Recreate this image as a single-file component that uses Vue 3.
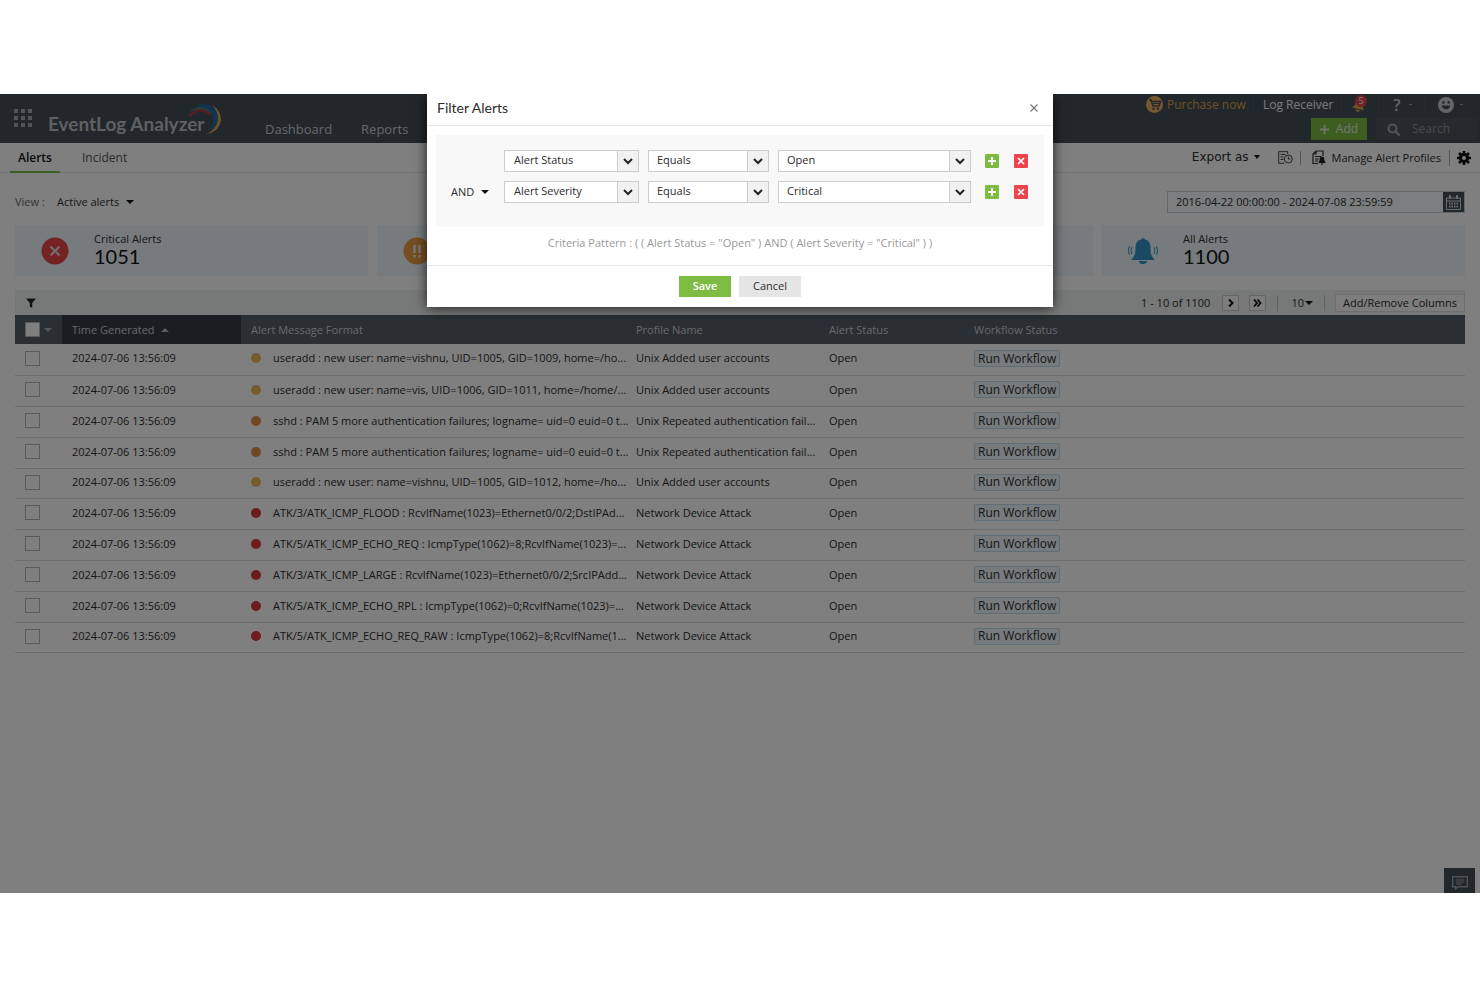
<script setup>
import { ref } from 'vue'

const stamp = '2024-07-06 13:56:09'
const rows = [
  { tone: 'trouble', message: 'useradd : new user: name=vishnu, UID=1005, GID=1009, home=/ho...', profile: 'Unix Added user accounts' },
  { tone: 'trouble', message: 'useradd : new user: name=vis, UID=1006, GID=1011, home=/home/...', profile: 'Unix Added user accounts' },
  { tone: 'attention', message: 'sshd : PAM 5 more authentication failures; logname= uid=0 euid=0 t...', profile: 'Unix Repeated authentication fail...' },
  { tone: 'attention', message: 'sshd : PAM 5 more authentication failures; logname= uid=0 euid=0 t...', profile: 'Unix Repeated authentication fail...' },
  { tone: 'trouble', message: 'useradd : new user: name=vishnu, UID=1005, GID=1012, home=/ho...', profile: 'Unix Added user accounts' },
  { tone: 'critical', message: 'ATK/3/ATK_ICMP_FLOOD : RcvIfName(1023)=Ethernet0/0/2;DstIPAd...', profile: 'Network Device Attack' },
  { tone: 'critical', message: 'ATK/5/ATK_ICMP_ECHO_REQ : IcmpType(1062)=8;RcvIfName(1023)=...', profile: 'Network Device Attack' },
  { tone: 'critical', message: 'ATK/3/ATK_ICMP_LARGE : RcvIfName(1023)=Ethernet0/0/2;SrcIPAdd...', profile: 'Network Device Attack' },
  { tone: 'critical', message: 'ATK/5/ATK_ICMP_ECHO_RPL : IcmpType(1062)=0;RcvIfName(1023)=...', profile: 'Network Device Attack' },
  { tone: 'critical', message: 'ATK/5/ATK_ICMP_ECHO_REQ_RAW : IcmpType(1062)=8;RcvIfName(1...', profile: 'Network Device Attack' },
]

const filters = ref([
  { field: 'Alert Status', op: 'Equals', value: 'Open' },
  { field: 'Alert Severity', op: 'Equals', value: 'Critical' },
])
const range = ref('2016-04-22 00:00:00 - 2024-07-08 23:59:59')
</script>

<template>
  <div class="screen">
    <header class="topbar">
      <button class="apps" aria-label="Applications">
        <svg width="18" height="18" viewBox="0 0 18 18"><path d="M0 0h4v4H0zM7 0h4v4H7zM14 0h4v4h-4zM0 7h4v4H0zM7 7h4v4H7zM14 7h4v4h-4zM0 14h4v4H0zM7 14h4v4H7zM14 14h4v4h-4z" fill="#a4a9ac" /></svg>
      </button>
      <a class="brand" href="#">
        <span>EventLog Analyzer</span>
        <svg class="swoosh" width="34" height="32" viewBox="0 0 34 32" fill="none">
          <path d="M24 2Q33 7 33 17Q31 29 18 31Q28 27 30 17Q30 8 24 2Z" fill="#e0a850" />
          <path d="M7 4Q17-2 26 5Q32 13 28 22Q26 26 22 28Q27 19 24 12Q19 3 7 4Z" fill="#22689f" />
          <path d="M3 8Q14 0 23 10Q13 4 3 8Z" fill="#43837a" stroke="#43837a" />
          <path d="M2 13Q12 2 23 12" stroke="#c8343f" stroke-width="3" stroke-dasharray="2 1" />
        </svg>
      </a>
      <nav class="mainnav"><a href="#">Dashboard</a><a href="#">Reports</a></nav>
      <div class="tools">
        <div class="tools-row upper">
          <a class="purchase" href="#">
            <svg width="17" height="17" viewBox="0 0 17 17" fill="none"><circle cx="8.500" cy="8.500" r="8.500" fill="#eab05c" /><path d="M3 4h2l2 6h6l1.500-4.500H5.500" stroke="#444e56" stroke-width="1.400" /><path d="M6.500 7.500h7" stroke="#444e56" /><circle cx="7.500" cy="12.700" r="1.200" fill="#444e56" /><circle cx="12" cy="12.700" r="1.200" fill="#444e56" /></svg>
            Purchase now</a>
          <a class="receiver" href="#">Log Receiver</a>
          <button class="notice" aria-label="Notifications">
            <svg width="14" height="14" viewBox="0 0 14 14"><path d="M7 1a4 4 0 0 0-4 4v3L1 11h12l-2-3V5a4 4 0 0 0-4-4zM5 12h4a2 2 0 0 1-4 0z" fill="#e0a04c" transform="rotate(14 7 7)" /></svg>
            <span class="badge">5</span>
          </button>
          <button class="help" aria-label="Help">?<i class="tick"></i></button>
          <button class="user" aria-label="Account">
            <svg width="16" height="16" viewBox="0 0 16 16"><circle cx="8" cy="8" r="8" fill="#c9cccd" /><circle cx="5.300" cy="5.500" r="1.300" fill="#444e56" /><circle cx="10.700" cy="5.500" r="1.300" fill="#444e56" /><path d="M3.500 8.500h9a4.600 4.600 0 0 1-9 0z" fill="#444e56" /></svg>
            <i class="tick"></i>
          </button>
        </div>
        <div class="tools-row lower">
          <button class="add"><svg width="9" height="9" viewBox="0 0 9 9"><path d="M4.500 0v9M0 4.500h9" stroke="#dfe8d8" stroke-width="2" /></svg>Add</button>
          <label class="search">
            <svg width="13" height="13" viewBox="0 0 13 13" fill="none"><circle cx="5.500" cy="5.500" r="4" stroke="#a5abae" stroke-width="2" /><path d="M8.500 8.500l4 4" stroke="#a5abae" stroke-width="2" /></svg>
            <input type="search" placeholder="Search" aria-label="Search" />
          </label>
        </div>
      </div>
    </header>

    <div class="subbar">
      <nav class="tabs"><a class="active" href="#">Alerts</a><a href="#">Incident</a></nav>
      <div class="actions">
        <button class="export">Export as <i class="caret small"></i></button>
        <button class="history" aria-label="Report schedule">
          <svg width="15" height="13" viewBox="0 0 15 13" fill="none" stroke="#444"><path d="M6 12.300H.700V.700h9V3M2.500 3.500h5M2.500 6h3M2.500 8.500h3" /><circle cx="10.300" cy="8" r="4" /><path d="M10.300 5.500V8h2" /></svg>
        </button>
        <a class="manage" href="#">
          <svg width="14" height="15" viewBox="0 0 14 15" fill="none"><path d="M6 13.500H1V4l3-3h7v5M4 1v3H1M3 6.500h6M3 9h4M3 11h3" stroke="#333" stroke-width="1.200" /><path d="M10 6.500c-2 0-2.300 1.500-2.300 3.500L6.300 13h7.400l-1.400-3c0-2-.3-3.500-2.300-3.500zM8.800 13.500h2.400a1.200 1.200 0 0 1-2.400 0z" fill="#222" /></svg>
          Manage Alert Profiles</a>
        <button class="gear" aria-label="Settings">
          <svg width="14" height="14" viewBox="0 0 14 14" fill="none"><circle cx="7" cy="7" r="3.500" stroke="#111" stroke-width="3" /><path d="M7 0v3M7 11v3M0 7h3M11 7h3M2 2l2 2M10 10l2 2M12 2l-2 2M4 10l-2 2" stroke="#111" stroke-width="2.600" /></svg>
        </button>
      </div>
    </div>

    <main class="content">
      <div class="viewbar">
        <span class="muted">View :</span>
        <button class="viewpick">Active alerts <i class="caret"></i></button>
        <div class="daterange">
          <input v-model="range" aria-label="Date range" />
          <button aria-label="Open calendar">
            <svg width="15" height="15" viewBox="0 0 15 15" fill="none" stroke="#d5dadd"><path d="M.500 3h14v11.500H.500zM.500 6h14" /><path d="M4 0v4M11 0v4" stroke-width="2" /><path d="M3 8.500h9M3 11.500h9" stroke-width="2" stroke-dasharray="1.500 1" /></svg>
          </button>
        </div>
      </div>

      <section class="cards">
        <article class="card">
          <svg width="28" height="28" viewBox="0 0 28 28"><circle cx="14" cy="14" r="13.500" fill="#e94448" /><path d="M9.500 9.500l9 9M18.500 9.500l-9 9" stroke="#e8e0e0" stroke-width="2" /></svg>
          <div><h2>Critical Alerts</h2><strong>1051</strong></div>
        </article>
        <article class="card">
          <svg width="28" height="28" viewBox="0 0 28 28"><circle cx="14" cy="14" r="13.500" fill="#eb9c42" /><path d="M11.500 8v8M16.500 8v8M11.500 18v2.500M16.500 18v2.500" stroke="#eee" stroke-width="2.500" /></svg>
        </article>
        <article class="card"></article>
        <article class="card">
          <svg width="30" height="28" viewBox="0 0 30 28"><path d="M15 1a2 2 0 0 1 2 1.500c4 1 5.500 4 5.500 8.500 0 6 1 8.500 4.500 12H3c3.500-3.500 4.500-6 4.500-12 0-4.500 1.500-7.500 5.500-8.500A2 2 0 0 1 15 1zM11 24h8a4 3 0 0 1-8 0z" fill="#3492c6" /><path d="M4 10q-2 4 0 7M1.500 9q-2.500 5 0 9M26 10q2 4 0 7M28.500 9q2.500 5 0 9" stroke="#3492c6" fill="none" /></svg>
          <div><h2>All Alerts</h2><strong>1100</strong></div>
        </article>
      </section>

      <div class="gridbar">
        <button class="funnel" aria-label="Filter"><svg width="10" height="10" viewBox="0 0 10 10"><path d="M0 .500h10L6.200 5v5L3.800 8.500V5z" fill="#222" /></svg></button>
        <span class="count">1 - 10 of 1100</span>
        <button class="pager" aria-label="Next page"><svg width="6" height="8" viewBox="0 0 6 8"><path d="M1 .500L4.500 4 1 7.500" stroke="#111" stroke-width="2" fill="none" /></svg></button>
        <button class="pager" aria-label="Last page"><svg width="9" height="8" viewBox="0 0 9 8"><path d="M1 .500L4 4 1 7.500M4.500 .500L7.500 4 4.500 7.500" stroke="#111" stroke-width="1.800" fill="none" /></svg></button>
        <button class="size">10<i class="caret"></i></button>
        <button class="columns">Add/Remove Columns</button>
      </div>

      <table class="grid">
        <colgroup><col class="c-check" /><col class="c-time" /><col class="c-msg" /><col class="c-profile" /><col class="c-status" /><col /></colgroup>
        <thead>
          <tr>
            <th><span class="pick"><input type="checkbox" aria-label="Select all" /><i class="caret light"></i></span></th>
            <th class="sorted">Time Generated <i class="caret up light"></i></th>
            <th>Alert Message Format</th>
            <th>Profile Name</th>
            <th>Alert Status</th>
            <th>Workflow Status</th>
          </tr>
        </thead>
        <tbody>
          <tr v-for="(row, i) in rows" :key="i">
            <td><span class="pick"><input type="checkbox" :aria-label="'Select alert ' + (i + 1)" /></span></td>
            <td>{{ stamp }}</td>
            <td class="wide"><span class="msg"><i class="dot" :class="row.tone"></i>{{ row.message }}</span></td>
            <td>{{ row.profile }}</td>
            <td>Open</td>
            <td><button class="run">Run Workflow</button></td>
          </tr>
        </tbody>
      </table>
    </main>

    <button class="chat" aria-label="Feedback">
      <svg width="16" height="14" viewBox="0 0 16 14" fill="none" stroke="#a0a6aa"><path d="M.700 .700h14.600v10H6L3.500 13v-2.300H.700z" stroke-width="1.400" /><path d="M4 4h8M4 6h8M4 8h6" /></svg>
    </button>

    <div class="backdrop">
      <section class="dialog" role="dialog" aria-labelledby="dialog-title">
        <header class="dialog-head">
          <h1 id="dialog-title">Filter Alerts</h1>
          <button aria-label="Close"><svg width="8" height="8" viewBox="0 0 8 8"><path d="M.500 .500l7 7M7.500 .500l-7 7" stroke="#777" stroke-width="1.200" /></svg></button>
        </header>
        <div class="criteria">
          <div v-for="(f, i) in filters" :key="i" class="criterion">
            <span class="joiner"><button v-if="i">AND <i class="caret"></i></button></span>
            <span class="pickbox field"><select v-model="f.field" aria-label="Field"><option>Alert Status</option><option>Alert Severity</option></select><svg width="10" height="7" viewBox="0 0 10 7"><path d="M1 1l4 4 4-4" stroke="#222" stroke-width="2" fill="none" /></svg></span>
            <span class="pickbox op"><select v-model="f.op" aria-label="Comparator"><option>Equals</option></select><svg width="10" height="7" viewBox="0 0 10 7"><path d="M1 1l4 4 4-4" stroke="#222" stroke-width="2" fill="none" /></svg></span>
            <span class="pickbox value"><select v-model="f.value" aria-label="Value"><option>Open</option><option>Critical</option></select><svg width="10" height="7" viewBox="0 0 10 7"><path d="M1 1l4 4 4-4" stroke="#222" stroke-width="2" fill="none" /></svg></span>
            <button class="mini plus" aria-label="Add criterion"><svg width="8" height="8" viewBox="0 0 8 8"><path d="M4 0v8M0 4h8" stroke="#fff" stroke-width="2" /></svg></button>
            <button class="mini minus" aria-label="Remove criterion"><svg width="8" height="8" viewBox="0 0 8 8"><path d="M1 1l6 6M7 1l-6 6" stroke="#fff" stroke-width="1.600" /></svg></button>
          </div>
        </div>
        <p class="pattern">Criteria Pattern : ( ( Alert Status = "Open" ) AND ( Alert Severity = "Critical" ) )</p>
        <footer class="dialog-foot"><button class="save">Save</button><button class="cancel">Cancel</button></footer>
      </section>
    </div>
  </div>
</template>

<style>
body { margin: 0; background: #fff; }
</style>

<style scoped>
* { box-sizing: border-box; }
.screen { position: relative; margin: 94px 0; min-height: calc(100vh - 188px); background: #fff; overflow: hidden; font: 11px/16px "Open Sans", sans-serif; color: #2c2c2c; }
button, input, select { font: inherit; color: inherit; margin: 0; padding: 0; border: 0; border-radius: 0; background: none; }
button { display: inline-flex; align-items: center; justify-content: center; cursor: pointer; white-space: nowrap; }
a { color: inherit; text-decoration: none; white-space: nowrap; }
svg { flex: none; display: block; }
h1, h2, p { margin: 0; font-weight: 400; }

.caret { display: inline-block; flex: none; border: 4px solid transparent; border-top-color: #111; border-bottom: 0; }
.caret.small { border-width: 4px 3px 0; }
.caret.light { border-top-color: #b4b8bb; }
.caret.up { border-top: 0; border-bottom: 4px solid #b4b8bb; }

.topbar { display: flex; height: 49px; background: #444e56; color: #ccd0d2; }
.apps { align-self: flex-start; margin: 15px 0 0 14px; }
.brand { display: flex; margin-left: 16px; width: 176px; font: 700 19px/24px Lato, sans-serif; color: #bcc1c4; padding-top: 18px; position: relative; }
.swoosh { position: absolute; right: 2px; top: 9px; }
.mainnav { display: flex; gap: 29px; margin-left: 41px; padding-top: 27px; font-size: 13px; }
.tools { margin-left: auto; width: 334px; }
.tools-row { display: flex; height: 22px; }
.upper { height: 24px; padding-bottom: 3px; align-items: center; font-size: 12px; }
.upper > * + * { border-left: 1px solid #4d575f; height: 18px; }
.lower { justify-content: flex-end; gap: 9px; padding-right: 3px; }
.purchase { display: flex; align-items: center; gap: 4px; width: 107px; color: #dba24a; }
.receiver { width: 88px; padding-left: 9px; line-height: 18px; color: #f4f4f4; }
.notice { position: relative; width: 37px; padding-right: 2px; }
.badge { position: absolute; right: 11px; top: -1px; width: 12px; height: 12px; border-radius: 6px; background: #e04347; color: #f8f8f8; font-size: 9px; line-height: 12px; }
.help { width: 46px; padding-left: 2px; font: 600 16px/18px "Open Sans", sans-serif; color: #c9cccd; gap: 8px; }
.tick { width: 3px; height: 1px; background: #9aa0a4; }
.user { gap: 6px; padding-left: 13px; }
.add { width: 56px; gap: 7px; background: #7dbb42; color: #eaf0e6; font-size: 12px; }
.search { display: flex; align-items: center; gap: 12px; width: 101px; padding-left: 11px; background: #4b545b; }
.search input { width: 60px; outline: 0; font-size: 12px; }
.search input::placeholder { color: #8d9498; opacity: 1; }

.subbar { display: flex; height: 30px; border-bottom: 1px solid #e4e4e4; justify-content: space-between; font-size: 12px; }
.tabs { display: flex; }
.tabs a { height: 30px; line-height: 29px; color: #555; margin-left: 22px; }
.tabs .active { margin-left: 10px; padding: 0 8px; font-weight: 600; color: #111; border-bottom: 2px solid #7dbb42; }
.actions { display: flex; align-items: center; padding-right: 9px; }
.export { font: 12px/16px "DejaVu Sans", sans-serif; gap: 5px; margin-right: 18px; padding-bottom: 1px; }
.history { padding-right: 7px; border-right: 1px solid #aaa; height: 14px; margin-right: 11px; }
.manage { display: flex; gap: 6px; align-items: center; font-size: 11px; border-right: 1px solid #aaa; padding-right: 8px; margin-right: 7px; }

.content { padding: 0 15px; }
.viewbar { display: flex; align-items: center; padding: 18px 0 12px; }
.muted { color: #666; width: 42px; }
.viewpick { gap: 7px; }
.daterange { display: flex; margin-left: auto; width: 298px; height: 22px; border: 1px solid #c4ced3; }
.daterange input { flex: 1; min-width: 0; padding: 0 8px; background: #f7fbfc; }
.daterange button { width: 21px; background: #444e56; }
.cards { display: grid; grid-template-columns: 353fr 353fr 354fr 363fr; gap: 9px; }
.card { display: flex; align-items: center; height: 51px; padding-left: 26px; gap: 25px; background: #eef7fa; }
.card h2 { font-size: 11px; line-height: 14px; }
.card strong { display: block; font: 400 20px/21px Lato, sans-serif; color: #111; padding-bottom: 3px; }
.gridbar { display: flex; align-items: center; height: 25px; margin-top: 14px; background: #eff0f0; }
.funnel { margin-left: 11px; }
.count { margin-left: auto; margin-right: 12px; }
.pager { width: 17px; height: 16px; margin-right: 10px; background: #fbfbfb; border: 1px solid #ccc; }
.size { height: 16px; border: solid #c4c4c4; border-width: 0 1px; padding: 0 11px 0 13px; gap: 1px; margin: 0 10px 0 1px; }
.columns { height: 18px; padding: 0 7px; background: #fbfbfb; border: 1px solid #ddd; }

.grid { width: 100%; border-collapse: collapse; table-layout: fixed; }
.c-check { width: 47px; }
.c-time { width: 179px; }
.c-msg { width: 385px; }
.c-profile { width: 193px; }
.c-status { width: 145px; }
th, td { padding: 0 0 0 10px; text-align: left; font-weight: 400; white-space: nowrap; overflow: hidden; }
th { height: 29px; background: #545f67; color: #ccd0d2; }
th.sorted { background: #343d44; }
th.sorted .caret { margin: 0 0 2px 4px; }
td { height: 31px; border-bottom: 1px solid #dadada; padding-bottom: 2px; }
tbody tr:nth-child(5n) td { height: 30px; }
.pick { display: flex; align-items: center; gap: 4px; }
.pick input { appearance: none; width: 15px; height: 15px; background: #fff; border: 1px solid #b4b4b4; }
.msg { display: flex; align-items: center; gap: 12px; }
td.wide { overflow: visible; }
.dot { flex: none; width: 10px; height: 10px; border-radius: 5px; }
.dot.trouble { background: #ebb65c; }
.dot.attention { background: #dc9046; }
.dot.critical { background: #d8383c; }
.run { height: 17px; padding: 0 3px; border: 1px solid #c3dbe8; border-radius: 2px; background: #eef7fa; font-size: 12px; vertical-align: middle; }
.chat { position: absolute; right: 5px; bottom: 0; width: 31px; height: 25px; padding-top: 4px; background: #444e56; }

.backdrop { position: absolute; inset: 0; background: rgba(0, 0, 0, .5); display: flex; justify-content: center; align-items: flex-start; }
.dialog { width: 626px; background: #fff; box-shadow: 0 1px 12px rgba(0, 0, 0, .75); }
.dialog-head { display: flex; justify-content: space-between; align-items: center; height: 32px; padding: 0 15px 3px 10px; border-bottom: 1px solid #e8e8e8; }
.dialog-head h1 { font: 14px/18px Lato, sans-serif; }
.criteria { margin: 9px 9px 0; padding: 15px 15px 24px; background: #f8f8f8; display: grid; gap: 9px; }
.criterion { display: flex; align-items: center; height: 22px; }
.joiner { width: 53px; }
.joiner button { gap: 7px; }
.pickbox { position: relative; display: flex; height: 22px; margin-right: 9px; border: 1px solid #ccc; background: linear-gradient(to left, #f1f1f1 20px, #ccc 20px, #ccc 21px, #fff 21px); }
.pickbox select { appearance: none; width: 100%; padding: 0 24px 2px 9px; outline: 0; }
.pickbox svg { position: absolute; right: 5px; top: 7px; pointer-events: none; }
.field { width: 135px; }
.op { width: 121px; }
.op select, .value select { padding-left: 8px; }
.value { width: 193px; margin-right: 14px; }
.mini { width: 14px; height: 14px; border-radius: 1px; margin-right: 15px; }
.plus { background: #7dbb42; }
.minus { background: #ee444b; margin-right: 0; }
.pattern { padding: 8px 0 14px; text-align: center; color: #999; border-bottom: 1px solid #e5e5e5; }
.dialog-foot { display: flex; justify-content: center; gap: 8px; padding: 10px 0; }
.dialog-foot button { height: 21px; padding-bottom: 2px; }
.save { width: 52px; background: #7dbb42; color: #fff; font-weight: 600; }
.cancel { width: 62px; background: #e5e5e5; }
</style>
